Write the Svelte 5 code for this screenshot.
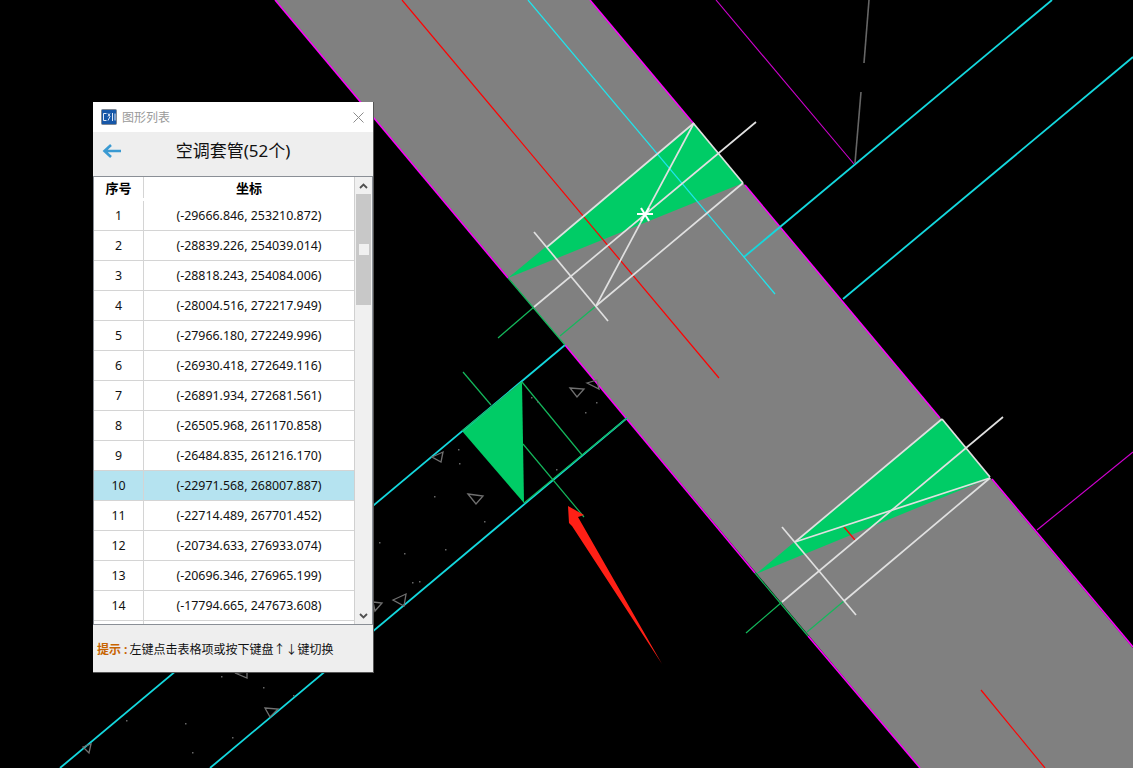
<script>
  // table data
  const rows = [
    ['1', '(-29666.846, 253210.872)'],
    ['2', '(-28839.226, 254039.014)'],
    ['3', '(-28818.243, 254084.006)'],
    ['4', '(-28004.516, 272217.949)'],
    ['5', '(-27966.180, 272249.996)'],
    ['6', '(-26930.418, 272649.116)'],
    ['7', '(-26891.934, 272681.561)'],
    ['8', '(-26505.968, 261170.858)'],
    ['9', '(-26484.835, 261216.170)'],
    ['10', '(-22971.568, 268007.887)'],
    ['11', '(-22714.489, 267701.452)'],
    ['12', '(-20734.633, 276933.074)'],
    ['13', '(-20696.346, 276965.199)'],
    ['14', '(-17794.665, 247673.608)'],
    ['', '']
  ];
  const selected = '10';

  // drawing layers: [x1, y1, x2, y2]
  const cyan = [
    [60, 768, 565, 345], [210, 768, 627, 418], [1052, 0, 744, 257],
    [1133, 57, 843, 299]
  ];
  const cyanThin = [[528, 0, 775, 294]];
  const magentaThin = [[716, 0, 854, 164], [1037, 530, 1133, 452]];
  const magenta = [
    [745, 185, 940, 418], [992, 479, 1133, 647], [590, 0, 694, 124], [275, 0, 508, 278],
    [565, 345, 755, 573], [808, 636, 920, 768]
  ];
  const red = [[402, 0, 719, 378], [981, 690, 1045, 768], [844, 527, 855, 540]];
  const gray = [[869, 0, 864, 63], [861, 92, 855, 163]];
  const white = [
    [694, 123, 547, 247], [756, 122, 534, 307], [743, 183, 596, 306],
    [694, 123, 596, 306], [534, 232, 608, 321], [694, 124, 743, 183],
    [942, 419, 795, 542], [795, 542, 990, 478], [1003, 417, 782, 602],
    [990, 478, 844, 601], [782, 527, 856, 615], [942, 419, 990, 477]
  ];
  const green = [
    [534, 307, 498, 338], [596, 306, 560, 336], [782, 602, 746, 633],
    [844, 601, 807, 632], [463, 372, 491, 405], [522, 382, 582, 455],
    [523, 444, 584, 517], [462, 431, 522, 382], [524, 503, 627, 418],
    [508, 278, 565, 345], [755, 573, 808, 636]
  ];
  const star = [[637, 214, 653, 214], [641, 208, 649, 221], [649, 208, 641, 221]];
  const fills = [
    '694,124 743,183 508,278',
    '942,419 990,478 756,574',
    '522,382 462,431 524,503'
  ];
  const marks = [
    '570,388 584,389 577,397', '587,383 597,380 599,389', '432,457 443,452 441,462',
    '468,494 483,496 476,504', '393,600 406,594 404,606', '373,602 382,603 375,611',
    '265,708 278,709 270,717', '235,673 247,678 247,672', '83,747 91,744 89,753'
  ];
  const dots = [
    [531, 397], [537, 401], [596, 402], [585, 412], [556, 469], [458, 449], [459, 463],
    [434, 496], [484, 521], [379, 542], [404, 553], [445, 549], [412, 582], [419, 581],
    [263, 687], [221, 676], [293, 695], [126, 720], [185, 723], [232, 737], [192, 752]
  ];
</script>

<div class="desktop">
  <svg class="canvas" viewBox="0 0 1133 768" width="1133" height="768">
    <polygon points="275,0 590,0 1133,648 1133,768 920,768" fill="#808080" />
    {#each magenta as l}
      <line x1={l[0]} y1={l[1]} x2={l[2]} y2={l[3]} class="magenta" />
    {/each}
    {#each magentaThin as l}
      <line x1={l[0]} y1={l[1]} x2={l[2]} y2={l[3]} class="magenta thin" />
    {/each}
    {#each fills as p}
      <polygon points={p} fill="#00cc66" />
    {/each}
    {#each cyan as l}
      <line x1={l[0]} y1={l[1]} x2={l[2]} y2={l[3]} class="cyan" />
    {/each}
    {#each cyanThin as l}
      <line x1={l[0]} y1={l[1]} x2={l[2]} y2={l[3]} class="cyan thin" />
    {/each}
    {#each red as l}
      <line x1={l[0]} y1={l[1]} x2={l[2]} y2={l[3]} class="red" />
    {/each}
    {#each gray as l}
      <line x1={l[0]} y1={l[1]} x2={l[2]} y2={l[3]} class="gray" />
    {/each}
    {#each green as l}
      <line x1={l[0]} y1={l[1]} x2={l[2]} y2={l[3]} class="green" />
    {/each}
    {#each white as l}
      <line x1={l[0]} y1={l[1]} x2={l[2]} y2={l[3]} class="white" />
    {/each}
    {#each star as l}
      <line x1={l[0]} y1={l[1]} x2={l[2]} y2={l[3]} class="star" />
    {/each}
    {#each marks as p}
      <polygon points={p} class="mark" />
    {/each}
    {#each dots as d}
      <rect x={d[0]} y={d[1]} width="1.5" height="1.5" fill="#666" />
    {/each}
    <!-- annotation arrow -->
    <polygon points="568,506 584,515 578,517 662,664 572,526 569,523" fill="#ff2016" />
  </svg>

  <div class="dialog">
    <div class="titlebar">
      <svg class="logo" viewBox="0 0 16 16" width="16" height="16">
        <rect x="0.500" y="0.500" width="15" height="15" rx="1" fill="#1657a8" stroke="#7d8794" />
        <path d="M2.500 4.500h3M2.500 4.500v7h3M7 4.500l2 3-2 4M9 4.500l-2 3M11.500 4v8M14 4.500v7" fill="none" stroke="#dfe9f6" stroke-width="1" />
      </svg>
      <span class="title">图形列表</span>
      <svg class="close" viewBox="0 0 11 11" width="11" height="11">
        <path d="M0.500 0.500l10 10M10.500 0.500l-10 10" stroke="#8c8c8c" stroke-width="1" fill="none" />
      </svg>
    </div>

    <div class="head">
      <svg class="back" viewBox="0 0 20 16" width="20" height="16">
        <path d="M19 8H3M9 2L2.500 8l6.500 6" stroke="#3a9ad2" stroke-width="2.600" fill="none" />
      </svg>
      <span class="heading">空调套管(52个)</span>
    </div>

    <div class="tablewrap">
      <div class="table">
        <div class="row hdr">
          <div class="no">序号</div>
          <div class="coord">坐标</div>
        </div>
        {#each rows as r}
          <div class="row" class:sel={r[0] === selected}>
            <div class="no">{r[0]}</div>
            <div class="coord">{r[1]}</div>
          </div>
        {/each}
      </div>
      <div class="scrollbar">
        <svg viewBox="0 0 9 6" width="9" height="6"><path d="M1 5l3.500-3.500L8 5" stroke="#505050" stroke-width="1.800" fill="none" /></svg>
        <div class="track">
          <div class="thumb"><div class="grip"></div></div>
        </div>
        <svg viewBox="0 0 9 6" width="9" height="6"><path d="M1 1l3.500 3.500L8 1" stroke="#505050" stroke-width="1.800" fill="none" /></svg>
      </div>
    </div>

    <div class="foot">
      <b>提示 :</b><span>左键点击表格项或按下键盘↑↓键切换</span>
    </div>
  </div>
</div>

<style>
  :global(body) {
    margin: 0;
    background: #000;
  }

  .desktop {
    position: relative;
    width: 1133px;
    height: 768px;
    overflow: hidden;
    background: #000;
    font-family: "Noto Sans", "Noto Sans CJK SC", sans-serif;
  }

  .canvas {
    position: absolute;
    left: 0;
    top: 0;
  }

  .cyan { stroke: #14d8de; stroke-width: 1.800; }
  .cyan.thin { stroke: #1ee6ee; stroke-width: 1.200; }
  .magenta { stroke: #f0f; stroke-width: 1.500; }
  .magenta.thin { stroke: #d000d0; stroke-width: 1.100; }
  .red { stroke: #f00; stroke-width: 1.200; }
  .gray { stroke: #666; stroke-width: 1.600; }
  .green { stroke: #14b85c; stroke-width: 1.200; }
  .white { stroke: #e0e0e0; stroke-width: 1.700; }
  .star { stroke: #fff; stroke-width: 2; }
  .mark { fill: none; stroke: #707070; stroke-width: 1.300; }

  .dialog {
    position: absolute;
    left: 93px;
    top: 102px;
    width: 281px;
    height: 571px;
    box-sizing: border-box;
    display: flex;
    flex-direction: column;
    background: #eee;
    border-right: 1px solid #555;
    border-bottom: 1px solid #555;
  }

  .titlebar {
    height: 30px;
    flex: none;
    display: flex;
    align-items: center;
    padding: 0 9px 0 8px;
    background: #fff;
  }

  .logo {
    flex: none;
  }

  .title {
    margin-left: 5px;
    font-size: 12px;
    color: #9a9a9a;
    flex: 1;
  }

  .head {
    position: relative;
    height: 44px;
    flex: none;
    display: flex;
    align-items: center;
    justify-content: center;
    box-sizing: border-box;
    padding: 0 0 9px;
  }

  .back {
    position: absolute;
    left: 9px;
    top: 11px;
  }

  .heading {
    font-size: 17px;
    color: #111;
  }

  .tablewrap {
    height: 449px;
    flex: none;
    display: flex;
    box-sizing: border-box;
    border: 1px solid #8a8f96;
    background: #fff;
    overflow: hidden;
  }

  .table {
    flex: 1;
    min-width: 0;
    border-right: 1px solid #d0d0d0;
  }

  .row {
    height: 30px;
    display: flex;
    box-sizing: border-box;
    border-bottom: 1px solid #d4d4d4;
    font-size: 12.400px;
    color: #111;
  }

  .row.hdr {
    height: 24px;
    border-bottom: 0;
    padding-bottom: 3px;
    font-size: 13px;
    font-weight: 700;
    color: #000;
  }

  .row.sel {
    background: #b5e3f0;
  }

  .no,
  .coord {
    display: flex;
    align-items: center;
    justify-content: center;
  }

  .no {
    width: 49px;
    flex: none;
    border-right: 1px solid #d4d4d4;
  }

  .coord {
    flex: 1;
  }

  .scrollbar {
    width: 17px;
    flex: none;
    display: flex;
    flex-direction: column;
    align-items: center;
    justify-content: space-between;
    padding: 6px 0 5px;
    box-sizing: border-box;
    background: #f0f0f0;
  }

  .track {
    flex: 1;
    width: 100%;
    padding-top: 5px;
    box-sizing: border-box;
  }

  .thumb {
    height: 111px;
    margin: 0 1px;
    display: flex;
    align-items: center;
    justify-content: center;
    background: #c8c8c8;
  }

  .grip {
    width: 10px;
    height: 11px;
    background: #f0f0f0;
  }

  .foot {
    flex: 1;
    display: flex;
    align-items: center;
    padding: 0 0 0 4px;
    font-size: 12px;
    color: #111;
  }

  .foot b {
    color: #c86400;
    font-weight: 700;
    margin-right: 2px;
  }
</style>
